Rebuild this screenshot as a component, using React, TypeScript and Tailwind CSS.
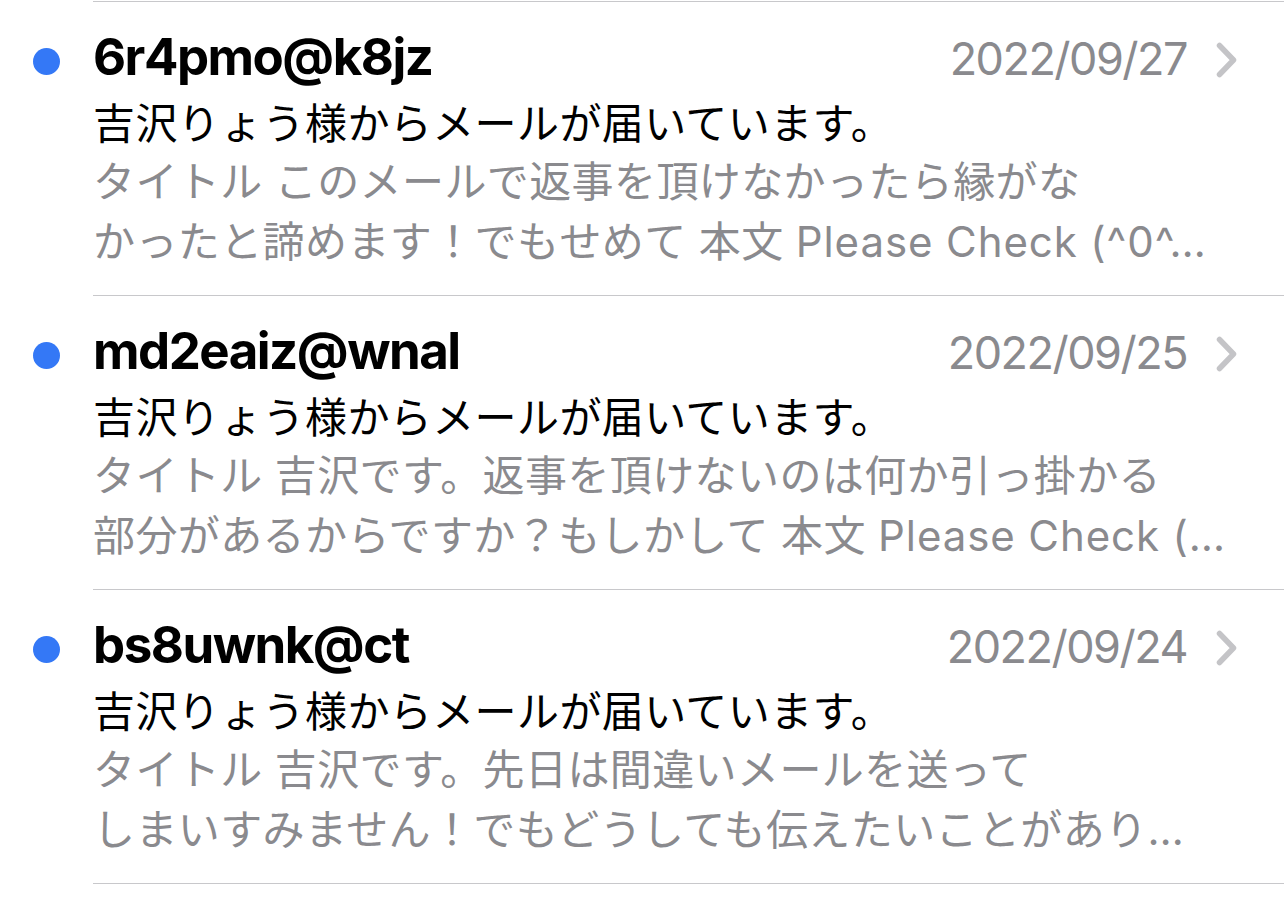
import React from "react";

type Mail = {
  from: string;
  date: string;
  subject: string;
  line1: string;
  line2: string;
  latin?: string;
};

const mails: Mail[] = [
  {
    from: "6r4pmo@k8jz",
    date: "2022/09/27",
    subject: "吉沢りょう様からメールが届いています。",
    line1: "タイトル このメールで返事を頂けなかったら縁がな",
    line2: "かったと諦めます！でもせめて 本文 ",
    latin: "Please Check (^0^…",
  },
  {
    from: "md2eaiz@wnal",
    date: "2022/09/25",
    subject: "吉沢りょう様からメールが届いています。",
    line1: "タイトル 吉沢です。返事を頂けないのは何か引っ掛かる",
    line2: "部分があるからですか？もしかして 本文 ",
    latin: "Please Check (…",
  },
  {
    from: "bs8uwnk@ct",
    date: "2022/09/24",
    subject: "吉沢りょう様からメールが届いています。",
    line1: "タイトル 吉沢です。先日は間違いメールを送って",
    line2: "しまいすみません！でもどうしても伝えたいことがあり…",
  },
];

function Chevron() {
  return (
    <svg width="22" height="36" viewBox="0 0 22 36" className="block">
      <path
        d="M3.5 3.5 L17.5 18 L3.5 32.5"
        fill="none"
        stroke="#c4c4c7"
        strokeWidth="5.5"
        strokeLinecap="round"
        strokeLinejoin="round"
      />
    </svg>
  );
}

function Row({ m }: { m: Mail }) {
  return (
    <div className="flex h-[294px]">
      <div className="w-[93px] shrink-0 pl-[33px] pt-[46px]">
        <div className="h-[27px] w-[27px] rounded-full bg-[#3478f6]" />
      </div>
      <div className="flex flex-1 flex-col border-b border-[#c8c8cb]">
        <div className="flex items-baseline pt-[25px] pr-[46px]">
          <div className="h-[60px] flex-1 text-[51px] font-bold leading-[60px] tracking-[-1.5px] text-black">
            {m.from}
          </div>
          <div className="h-[60px] text-[45px] leading-[60px] tracking-[-1.5px] text-[#8a8a8e]">
            {m.date}
          </div>
          <div className="ml-[29px] self-start mt-[15px]">
            <Chevron />
          </div>
        </div>
        <div className="mt-[14px] h-[42px] text-[42px] leading-[42px] tracking-[0.4px] text-black whitespace-nowrap">
          {m.subject}
        </div>
        <div className="mt-[7px] h-[60px] text-[42px] leading-[60px] tracking-[0.4px] text-[#8a8a8e] whitespace-nowrap">
          {m.line1}
        </div>
        <div className="h-[60px] text-[42px] leading-[60px] tracking-[0.4px] text-[#8a8a8e] whitespace-nowrap">
          {m.line2}
          {m.latin && <span className="tracking-[0.9px]">{m.latin}</span>}
        </div>
      </div>
    </div>
  );
}

export default function App() {
  return (
    <div
      className="h-[910px] w-[1284px] overflow-hidden bg-white pt-px"
      style={{ fontFamily: 'Inter, "Noto Sans CJK JP", sans-serif' }}
    >
      <div className="ml-[93px] h-px bg-[#c8c8cb]" />
      {mails.map((m) => (
        <Row key={m.from} m={m} />
      ))}
    </div>
  );
}
